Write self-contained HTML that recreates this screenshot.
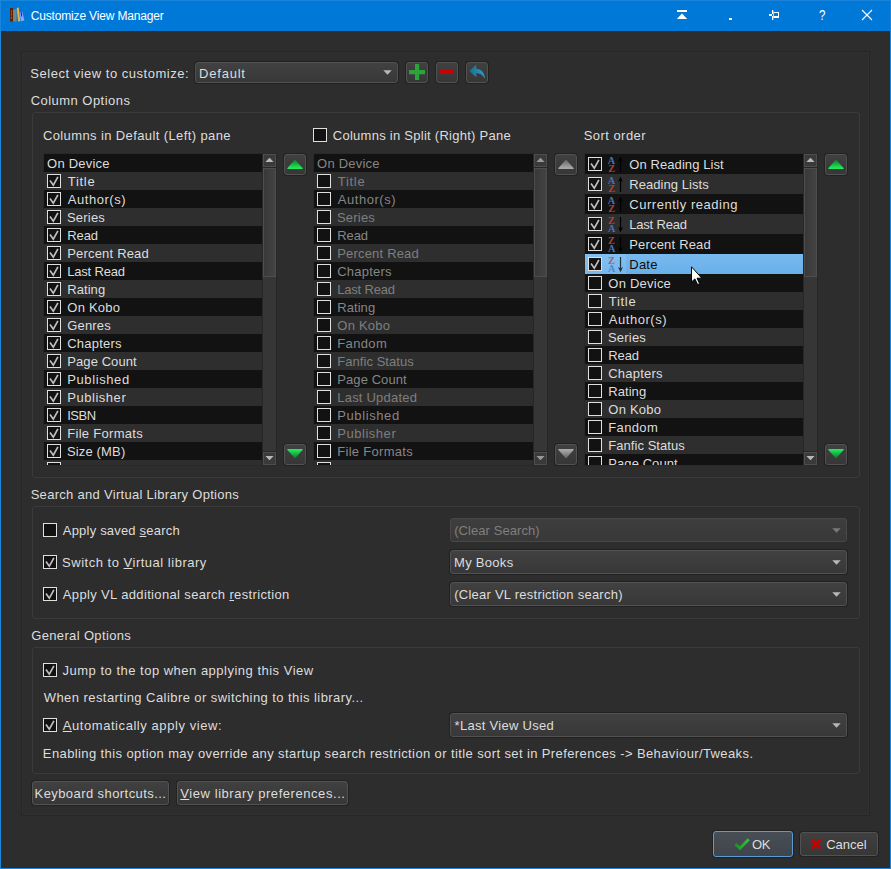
<!DOCTYPE html>
<html><head><meta charset="utf-8"><title>Customize View Manager</title><style>
html,body{margin:0;padding:0}
body{width:891px;height:869px;position:relative;overflow:hidden;background:#2d2d2d;color:#dddddd;font-family:"Liberation Sans",sans-serif;font-size:13px;line-height:18px}
body>div,body>span,body>svg,body>div>svg{position:absolute;display:block}
span{white-space:pre}
u{text-decoration:underline;text-underline-offset:1px}
</style></head><body>
<div style="left:0px;top:0px;width:891px;height:31px;background:#0078d7"></div>
<div style="left:0px;top:0px;width:891px;height:1px;background:#1a85db"></div>
<div style="left:0px;top:0px;width:1px;height:869px;background:#1a85db"></div>
<div style="left:890px;top:0px;width:1px;height:869px;background:#1a85db"></div>
<div style="left:0px;top:868px;width:891px;height:1px;background:#1a85db"></div>
<svg style="left:8px;top:6px" width="18" height="18" viewBox="8 6 18 18"><rect x="10" y="8" width="3.1" height="13.5" fill="#5c2407"/><path d="M11.1 10.5h0.9v2h-0.9zM11.1 13.5h0.9v2h-0.9zM11.1 16.8h0.9v2h-0.9z" fill="#b06a14"/><rect x="13.1" y="9.5" width="3.5" height="12" fill="#74868b"/><path d="M16.7 8.1L18.7 7.6L20.2 21.2L18.2 21.6z" fill="#e6b64b"/><path d="M19.6 12.2L22.4 12L24.4 20.6L20.9 21.3z" fill="#86a6ff"/><path d="M20.6 12.4L22 12.3L22.1 16.6L21.1 16.6z" fill="#1b27c4"/></svg>
<svg style="left:676px;top:9px" width="12" height="11" viewBox="676 9 12 11"><rect x="677" y="10" width="10" height="2" fill="#fff"/><path d="M682 13.6L687.2 19H676.8z" fill="#fff"/></svg>
<div style="left:729px;top:18px;width:3px;height:2px;background:#fff"></div>
<svg style="left:768px;top:9px" width="12" height="12" viewBox="768 9 12 12"><path d="M769 14h4v2h-4zM772 10h1.3v10H772zM773 12h6v6h-6zM774 13v3h4v-3z" fill="#fff" fill-rule="evenodd"/></svg>
<svg style="left:814px;top:6px" width="16" height="18" viewBox="814 6 16 18"><text x="822.2" y="20" font-size="14" text-anchor="middle" fill="#fff" font-family="Liberation Sans,sans-serif" transform="translate(822.2 0) scale(0.82 1) translate(-822.2 0)">?</text></svg>
<svg style="left:861px;top:9px" width="12" height="12" viewBox="861 9 12 12"><path d="M862 10L872 20M872 10L862 20" stroke="#fff" stroke-width="1.1" fill="none"/></svg>
<div style="left:21px;top:51px;width:849px;height:765px;box-sizing:border-box;border:1px solid #262626"></div>
<div style="left:22px;top:52px;width:847px;height:763px;box-sizing:border-box;border:1px solid #303030"></div>
<div style="left:195px;top:62px;width:203px;height:21px;box-sizing:border-box;border-radius:3px;border:1px solid #515151;box-shadow:0 0 0 1px #222;background:linear-gradient(#414141,#383838)"></div>
<svg style="left:383px;top:70px" width="9" height="5" viewBox="0 0 9 5"><path d="M0.3 0.2h8.4L4.5 4.8z" fill="#b8b8b8"/></svg>
<div style="left:406px;top:62px;width:22px;height:21px;box-sizing:border-box;border:1px solid #525252;border-radius:3px;box-shadow:0 0 0 1px #222;background:linear-gradient(#404040,#373737);"></div>
<svg style="left:409px;top:64px" width="16" height="16" viewBox="0 0 16 16"><path d="M6 0h4.2v6h5.8v4.2h-5.8v5.8h-4.2v-5.8h-6v-4.2h6z" fill="#2ba338"/></svg>
<div style="left:436px;top:62px;width:22px;height:21px;box-sizing:border-box;border:1px solid #525252;border-radius:3px;box-shadow:0 0 0 1px #222;background:linear-gradient(#404040,#373737);"></div>
<svg style="left:439px;top:64px" width="16" height="16" viewBox="0 0 16 16"><rect x="1" y="6" width="14" height="4" rx="0.5" fill="#cc0000"/></svg>
<div style="left:466px;top:62px;width:22px;height:21px;box-sizing:border-box;border:1px solid #525252;border-radius:3px;box-shadow:0 0 0 1px #222;background:linear-gradient(#404040,#373737);"></div>
<svg style="left:468px;top:63px" width="18" height="17" viewBox="468 63 18 17"><defs><linearGradient id="undo" x1="0" y1="0" x2="1" y2="0"><stop offset="0" stop-color="#1c6c8c"/><stop offset="1" stop-color="#2ba0cc"/></linearGradient></defs><path d="M469.3 71L476.3 64.7V68.7C481.2 68.8 484.6 72.4 485.1 79C483 75.2 480.6 73.4 476.3 73.3V77.3z" fill="url(#undo)"/></svg>
<div style="left:32px;top:112px;width:828px;height:366px;box-sizing:border-box;border:1px solid #3a3a3a;border-radius:3px"></div>
<div style="left:313px;top:128px;width:14px;height:14px;box-sizing:border-box;border:1px solid #e0e0e0;background:#121212"></div>
<div style="left:43px;top:153px;width:234px;height:313px;background:#292929"></div>
<div style="left:44px;top:154px;width:218px;height:311px;background:#121212"></div>
<div style="left:44px;top:172px;width:218px;height:18px;background:#2e2e2e"></div>
<div style="left:47px;top:174px;width:14px;height:14px;box-sizing:border-box;border:1px solid #e0e0e0;background:#121212"><svg style="left:0;top:0" width="12" height="12" viewBox="0 0 12 12"><path d="M2 5.6L5.3 10.2L9.9 1.9" fill="none" stroke="#bebebe" stroke-width="1.7"/></svg></div>
<div style="left:47px;top:192px;width:14px;height:14px;box-sizing:border-box;border:1px solid #e0e0e0;background:#121212"><svg style="left:0;top:0" width="12" height="12" viewBox="0 0 12 12"><path d="M2 5.6L5.3 10.2L9.9 1.9" fill="none" stroke="#bebebe" stroke-width="1.7"/></svg></div>
<div style="left:44px;top:208px;width:218px;height:18px;background:#2e2e2e"></div>
<div style="left:47px;top:210px;width:14px;height:14px;box-sizing:border-box;border:1px solid #e0e0e0;background:#121212"><svg style="left:0;top:0" width="12" height="12" viewBox="0 0 12 12"><path d="M2 5.6L5.3 10.2L9.9 1.9" fill="none" stroke="#bebebe" stroke-width="1.7"/></svg></div>
<div style="left:47px;top:228px;width:14px;height:14px;box-sizing:border-box;border:1px solid #e0e0e0;background:#121212"><svg style="left:0;top:0" width="12" height="12" viewBox="0 0 12 12"><path d="M2 5.6L5.3 10.2L9.9 1.9" fill="none" stroke="#bebebe" stroke-width="1.7"/></svg></div>
<div style="left:44px;top:244px;width:218px;height:18px;background:#2e2e2e"></div>
<div style="left:47px;top:246px;width:14px;height:14px;box-sizing:border-box;border:1px solid #e0e0e0;background:#121212"><svg style="left:0;top:0" width="12" height="12" viewBox="0 0 12 12"><path d="M2 5.6L5.3 10.2L9.9 1.9" fill="none" stroke="#bebebe" stroke-width="1.7"/></svg></div>
<div style="left:47px;top:264px;width:14px;height:14px;box-sizing:border-box;border:1px solid #e0e0e0;background:#121212"><svg style="left:0;top:0" width="12" height="12" viewBox="0 0 12 12"><path d="M2 5.6L5.3 10.2L9.9 1.9" fill="none" stroke="#bebebe" stroke-width="1.7"/></svg></div>
<div style="left:44px;top:280px;width:218px;height:18px;background:#2e2e2e"></div>
<div style="left:47px;top:282px;width:14px;height:14px;box-sizing:border-box;border:1px solid #e0e0e0;background:#121212"><svg style="left:0;top:0" width="12" height="12" viewBox="0 0 12 12"><path d="M2 5.6L5.3 10.2L9.9 1.9" fill="none" stroke="#bebebe" stroke-width="1.7"/></svg></div>
<div style="left:47px;top:300px;width:14px;height:14px;box-sizing:border-box;border:1px solid #e0e0e0;background:#121212"><svg style="left:0;top:0" width="12" height="12" viewBox="0 0 12 12"><path d="M2 5.6L5.3 10.2L9.9 1.9" fill="none" stroke="#bebebe" stroke-width="1.7"/></svg></div>
<div style="left:44px;top:316px;width:218px;height:18px;background:#2e2e2e"></div>
<div style="left:47px;top:318px;width:14px;height:14px;box-sizing:border-box;border:1px solid #e0e0e0;background:#121212"><svg style="left:0;top:0" width="12" height="12" viewBox="0 0 12 12"><path d="M2 5.6L5.3 10.2L9.9 1.9" fill="none" stroke="#bebebe" stroke-width="1.7"/></svg></div>
<div style="left:47px;top:336px;width:14px;height:14px;box-sizing:border-box;border:1px solid #e0e0e0;background:#121212"><svg style="left:0;top:0" width="12" height="12" viewBox="0 0 12 12"><path d="M2 5.6L5.3 10.2L9.9 1.9" fill="none" stroke="#bebebe" stroke-width="1.7"/></svg></div>
<div style="left:44px;top:352px;width:218px;height:18px;background:#2e2e2e"></div>
<div style="left:47px;top:354px;width:14px;height:14px;box-sizing:border-box;border:1px solid #e0e0e0;background:#121212"><svg style="left:0;top:0" width="12" height="12" viewBox="0 0 12 12"><path d="M2 5.6L5.3 10.2L9.9 1.9" fill="none" stroke="#bebebe" stroke-width="1.7"/></svg></div>
<div style="left:47px;top:372px;width:14px;height:14px;box-sizing:border-box;border:1px solid #e0e0e0;background:#121212"><svg style="left:0;top:0" width="12" height="12" viewBox="0 0 12 12"><path d="M2 5.6L5.3 10.2L9.9 1.9" fill="none" stroke="#bebebe" stroke-width="1.7"/></svg></div>
<div style="left:44px;top:388px;width:218px;height:18px;background:#2e2e2e"></div>
<div style="left:47px;top:390px;width:14px;height:14px;box-sizing:border-box;border:1px solid #e0e0e0;background:#121212"><svg style="left:0;top:0" width="12" height="12" viewBox="0 0 12 12"><path d="M2 5.6L5.3 10.2L9.9 1.9" fill="none" stroke="#bebebe" stroke-width="1.7"/></svg></div>
<div style="left:47px;top:408px;width:14px;height:14px;box-sizing:border-box;border:1px solid #e0e0e0;background:#121212"><svg style="left:0;top:0" width="12" height="12" viewBox="0 0 12 12"><path d="M2 5.6L5.3 10.2L9.9 1.9" fill="none" stroke="#bebebe" stroke-width="1.7"/></svg></div>
<div style="left:44px;top:424px;width:218px;height:18px;background:#2e2e2e"></div>
<div style="left:47px;top:426px;width:14px;height:14px;box-sizing:border-box;border:1px solid #e0e0e0;background:#121212"><svg style="left:0;top:0" width="12" height="12" viewBox="0 0 12 12"><path d="M2 5.6L5.3 10.2L9.9 1.9" fill="none" stroke="#bebebe" stroke-width="1.7"/></svg></div>
<div style="left:47px;top:444px;width:14px;height:14px;box-sizing:border-box;border:1px solid #e0e0e0;background:#121212"><svg style="left:0;top:0" width="12" height="12" viewBox="0 0 12 12"><path d="M2 5.6L5.3 10.2L9.9 1.9" fill="none" stroke="#bebebe" stroke-width="1.7"/></svg></div>
<div style="left:44px;top:460px;width:218px;height:5px;background:#2e2e2e"></div>
<div style="left:47px;top:462px;width:14px;height:3px;box-sizing:border-box;border:1px solid #e0e0e0;border-bottom:none;background:#121212"></div>
<div style="left:262px;top:154px;width:15px;height:311px;background:#272727"></div>
<div style="left:263px;top:168px;width:13px;height:283px;background:#363636"></div>
<div style="left:263px;top:154px;width:13px;height:13px;box-sizing:border-box;border:1px solid #4e4e4e;background:#3a3a3a"></div>
<svg style="left:265px;top:158px" width="9" height="5" viewBox="0 0 9 5"><path d="M0.4 4L4.2 0H4.8L8.6 4z" fill="#b8b8b8"/></svg>
<div style="left:263px;top:452px;width:13px;height:13px;box-sizing:border-box;border:1px solid #4e4e4e;background:#3a3a3a"></div>
<svg style="left:265px;top:456px" width="9" height="5" viewBox="0 0 9 5"><path d="M0.4 0L4.2 4H4.8L8.6 0z" fill="#b8b8b8"/></svg>
<div style="left:263px;top:168px;width:13px;height:109px;box-sizing:border-box;border:1px solid #4e4e4e;background:linear-gradient(90deg,#393939,#434343)"></div>
<div style="left:313px;top:153px;width:235px;height:313px;background:#292929"></div>
<div style="left:314px;top:154px;width:219px;height:311px;background:#121212"></div>
<div style="left:314px;top:172px;width:219px;height:18px;background:#2e2e2e"></div>
<div style="left:317px;top:174px;width:14px;height:14px;box-sizing:border-box;border:1px solid #e0e0e0;background:#121212"></div>
<div style="left:317px;top:192px;width:14px;height:14px;box-sizing:border-box;border:1px solid #e0e0e0;background:#121212"></div>
<div style="left:314px;top:208px;width:219px;height:18px;background:#2e2e2e"></div>
<div style="left:317px;top:210px;width:14px;height:14px;box-sizing:border-box;border:1px solid #e0e0e0;background:#121212"></div>
<div style="left:317px;top:228px;width:14px;height:14px;box-sizing:border-box;border:1px solid #e0e0e0;background:#121212"></div>
<div style="left:314px;top:244px;width:219px;height:18px;background:#2e2e2e"></div>
<div style="left:317px;top:246px;width:14px;height:14px;box-sizing:border-box;border:1px solid #e0e0e0;background:#121212"></div>
<div style="left:317px;top:264px;width:14px;height:14px;box-sizing:border-box;border:1px solid #e0e0e0;background:#121212"></div>
<div style="left:314px;top:280px;width:219px;height:18px;background:#2e2e2e"></div>
<div style="left:317px;top:282px;width:14px;height:14px;box-sizing:border-box;border:1px solid #e0e0e0;background:#121212"></div>
<div style="left:317px;top:300px;width:14px;height:14px;box-sizing:border-box;border:1px solid #e0e0e0;background:#121212"></div>
<div style="left:314px;top:316px;width:219px;height:18px;background:#2e2e2e"></div>
<div style="left:317px;top:318px;width:14px;height:14px;box-sizing:border-box;border:1px solid #e0e0e0;background:#121212"></div>
<div style="left:317px;top:336px;width:14px;height:14px;box-sizing:border-box;border:1px solid #e0e0e0;background:#121212"></div>
<div style="left:314px;top:352px;width:219px;height:18px;background:#2e2e2e"></div>
<div style="left:317px;top:354px;width:14px;height:14px;box-sizing:border-box;border:1px solid #e0e0e0;background:#121212"></div>
<div style="left:317px;top:372px;width:14px;height:14px;box-sizing:border-box;border:1px solid #e0e0e0;background:#121212"></div>
<div style="left:314px;top:388px;width:219px;height:18px;background:#2e2e2e"></div>
<div style="left:317px;top:390px;width:14px;height:14px;box-sizing:border-box;border:1px solid #e0e0e0;background:#121212"></div>
<div style="left:317px;top:408px;width:14px;height:14px;box-sizing:border-box;border:1px solid #e0e0e0;background:#121212"></div>
<div style="left:314px;top:424px;width:219px;height:18px;background:#2e2e2e"></div>
<div style="left:317px;top:426px;width:14px;height:14px;box-sizing:border-box;border:1px solid #e0e0e0;background:#121212"></div>
<div style="left:317px;top:444px;width:14px;height:14px;box-sizing:border-box;border:1px solid #e0e0e0;background:#121212"></div>
<div style="left:314px;top:460px;width:219px;height:5px;background:#2e2e2e"></div>
<div style="left:317px;top:462px;width:14px;height:3px;box-sizing:border-box;border:1px solid #e0e0e0;border-bottom:none;background:#121212"></div>
<div style="left:533px;top:154px;width:15px;height:311px;background:#272727"></div>
<div style="left:534px;top:168px;width:13px;height:283px;background:#363636"></div>
<div style="left:534px;top:154px;width:13px;height:13px;box-sizing:border-box;border:1px solid #4e4e4e;background:#3a3a3a"></div>
<svg style="left:536px;top:158px" width="9" height="5" viewBox="0 0 9 5"><path d="M0.4 4L4.2 0H4.8L8.6 4z" fill="#989898"/></svg>
<div style="left:534px;top:452px;width:13px;height:13px;box-sizing:border-box;border:1px solid #4e4e4e;background:#3a3a3a"></div>
<svg style="left:536px;top:456px" width="9" height="5" viewBox="0 0 9 5"><path d="M0.4 0L4.2 4H4.8L8.6 0z" fill="#989898"/></svg>
<div style="left:534px;top:168px;width:13px;height:109px;box-sizing:border-box;border:1px solid #4e4e4e;background:linear-gradient(90deg,#393939,#434343)"></div>
<div style="left:584px;top:153px;width:234px;height:313px;background:#292929"></div>
<div style="left:585px;top:154px;width:218px;height:311px;background:#121212"></div>
<div style="left:588px;top:157px;width:14px;height:14px;box-sizing:border-box;border:1px solid #e0e0e0;background:#121212"><svg style="left:0;top:0" width="12" height="12" viewBox="0 0 12 12"><path d="M2 5.6L5.3 10.2L9.9 1.9" fill="none" stroke="#bebebe" stroke-width="1.7"/></svg></div>
<svg style="left:607px;top:156px" width="17" height="17" viewBox="0 0 17 17"><text x="4.5" y="8" font-size="10.2" font-weight="bold" font-family="Liberation Serif,serif" text-anchor="middle" fill="#4a72bc">A</text><text x="4.6" y="16" font-size="10.2" font-weight="bold" font-family="Liberation Serif,serif" text-anchor="middle" fill="#a8443e">Z</text><path d="M12.9 16V4h1.2V16zM13.5 0.8L16 6L13.5 4.6L11 6z" fill="#000"/></svg>
<div style="left:585px;top:174px;width:218px;height:20px;background:#2e2e2e"></div>
<div style="left:588px;top:177px;width:14px;height:14px;box-sizing:border-box;border:1px solid #e0e0e0;background:#121212"><svg style="left:0;top:0" width="12" height="12" viewBox="0 0 12 12"><path d="M2 5.6L5.3 10.2L9.9 1.9" fill="none" stroke="#bebebe" stroke-width="1.7"/></svg></div>
<svg style="left:607px;top:176px" width="17" height="17" viewBox="0 0 17 17"><text x="4.5" y="8" font-size="10.2" font-weight="bold" font-family="Liberation Serif,serif" text-anchor="middle" fill="#4a72bc">A</text><text x="4.6" y="16" font-size="10.2" font-weight="bold" font-family="Liberation Serif,serif" text-anchor="middle" fill="#a8443e">Z</text><path d="M12.9 16V4h1.2V16zM13.5 0.8L16 6L13.5 4.6L11 6z" fill="#000"/></svg>
<div style="left:588px;top:197px;width:14px;height:14px;box-sizing:border-box;border:1px solid #e0e0e0;background:#121212"><svg style="left:0;top:0" width="12" height="12" viewBox="0 0 12 12"><path d="M2 5.6L5.3 10.2L9.9 1.9" fill="none" stroke="#bebebe" stroke-width="1.7"/></svg></div>
<svg style="left:607px;top:196px" width="17" height="17" viewBox="0 0 17 17"><text x="4.5" y="8" font-size="10.2" font-weight="bold" font-family="Liberation Serif,serif" text-anchor="middle" fill="#4a72bc">A</text><text x="4.6" y="16" font-size="10.2" font-weight="bold" font-family="Liberation Serif,serif" text-anchor="middle" fill="#a8443e">Z</text><path d="M12.9 16V4h1.2V16zM13.5 0.8L16 6L13.5 4.6L11 6z" fill="#000"/></svg>
<div style="left:585px;top:214px;width:218px;height:20px;background:#2e2e2e"></div>
<div style="left:588px;top:217px;width:14px;height:14px;box-sizing:border-box;border:1px solid #e0e0e0;background:#121212"><svg style="left:0;top:0" width="12" height="12" viewBox="0 0 12 12"><path d="M2 5.6L5.3 10.2L9.9 1.9" fill="none" stroke="#bebebe" stroke-width="1.7"/></svg></div>
<svg style="left:607px;top:216px" width="17" height="17" viewBox="0 0 17 17"><text x="4.5" y="8" font-size="10.2" font-weight="bold" font-family="Liberation Serif,serif" text-anchor="middle" fill="#a8443e">Z</text><text x="4.6" y="16" font-size="10.2" font-weight="bold" font-family="Liberation Serif,serif" text-anchor="middle" fill="#4a72bc">A</text><path d="M12.9 1V13h1.2V1zM13.5 16.2L16 11L13.5 12.4L11 11z" fill="#000"/></svg>
<div style="left:588px;top:237px;width:14px;height:14px;box-sizing:border-box;border:1px solid #e0e0e0;background:#121212"><svg style="left:0;top:0" width="12" height="12" viewBox="0 0 12 12"><path d="M2 5.6L5.3 10.2L9.9 1.9" fill="none" stroke="#bebebe" stroke-width="1.7"/></svg></div>
<svg style="left:607px;top:236px" width="17" height="17" viewBox="0 0 17 17"><text x="4.5" y="8" font-size="10.2" font-weight="bold" font-family="Liberation Serif,serif" text-anchor="middle" fill="#a8443e">Z</text><text x="4.6" y="16" font-size="10.2" font-weight="bold" font-family="Liberation Serif,serif" text-anchor="middle" fill="#4a72bc">A</text><path d="M12.9 1V13h1.2V1zM13.5 16.2L16 11L13.5 12.4L11 11z" fill="#000"/></svg>
<div style="left:585px;top:254px;width:218px;height:20px;background:linear-gradient(#78baef,#69afe9)"></div>
<div style="left:585px;top:254px;width:41px;height:20px;background:linear-gradient(#82c0f1,#76b7ec)"></div>
<div style="left:588px;top:257px;width:14px;height:14px;box-sizing:border-box;border:1px solid #e0e0e0;background:#121212"><svg style="left:0;top:0" width="12" height="12" viewBox="0 0 12 12"><path d="M2 5.6L5.3 10.2L9.9 1.9" fill="none" stroke="#bebebe" stroke-width="1.7"/></svg></div>
<svg style="opacity:0.72;left:607px;top:256px" width="17" height="17" viewBox="0 0 17 17"><text x="4.5" y="8" font-size="10.2" font-weight="bold" font-family="Liberation Serif,serif" text-anchor="middle" fill="#a8443e">Z</text><text x="4.6" y="16" font-size="10.2" font-weight="bold" font-family="Liberation Serif,serif" text-anchor="middle" fill="#4a72bc">A</text><path d="M12.9 1V13h1.2V1zM13.5 16.2L16 11L13.5 12.4L11 11z" fill="#000"/></svg>
<div style="left:588px;top:276px;width:14px;height:14px;box-sizing:border-box;border:1px solid #e0e0e0;background:#121212"></div>
<div style="left:585px;top:292px;width:218px;height:18px;background:#2e2e2e"></div>
<div style="left:588px;top:294px;width:14px;height:14px;box-sizing:border-box;border:1px solid #e0e0e0;background:#121212"></div>
<div style="left:588px;top:312px;width:14px;height:14px;box-sizing:border-box;border:1px solid #e0e0e0;background:#121212"></div>
<div style="left:585px;top:328px;width:218px;height:18px;background:#2e2e2e"></div>
<div style="left:588px;top:330px;width:14px;height:14px;box-sizing:border-box;border:1px solid #e0e0e0;background:#121212"></div>
<div style="left:588px;top:348px;width:14px;height:14px;box-sizing:border-box;border:1px solid #e0e0e0;background:#121212"></div>
<div style="left:585px;top:364px;width:218px;height:18px;background:#2e2e2e"></div>
<div style="left:588px;top:366px;width:14px;height:14px;box-sizing:border-box;border:1px solid #e0e0e0;background:#121212"></div>
<div style="left:588px;top:384px;width:14px;height:14px;box-sizing:border-box;border:1px solid #e0e0e0;background:#121212"></div>
<div style="left:585px;top:400px;width:218px;height:18px;background:#2e2e2e"></div>
<div style="left:588px;top:402px;width:14px;height:14px;box-sizing:border-box;border:1px solid #e0e0e0;background:#121212"></div>
<div style="left:588px;top:420px;width:14px;height:14px;box-sizing:border-box;border:1px solid #e0e0e0;background:#121212"></div>
<div style="left:585px;top:436px;width:218px;height:18px;background:#2e2e2e"></div>
<div style="left:588px;top:438px;width:14px;height:14px;box-sizing:border-box;border:1px solid #e0e0e0;background:#121212"></div>
<div style="left:588px;top:456px;width:14px;height:9px;box-sizing:border-box;border:1px solid #e0e0e0;border-bottom:none;background:#121212"></div>
<div style="left:803px;top:154px;width:15px;height:311px;background:#272727"></div>
<div style="left:804px;top:168px;width:13px;height:283px;background:#363636"></div>
<div style="left:804px;top:154px;width:13px;height:13px;box-sizing:border-box;border:1px solid #4e4e4e;background:#3a3a3a"></div>
<svg style="left:806px;top:158px" width="9" height="5" viewBox="0 0 9 5"><path d="M0.4 4L4.2 0H4.8L8.6 4z" fill="#b8b8b8"/></svg>
<div style="left:804px;top:452px;width:13px;height:13px;box-sizing:border-box;border:1px solid #4e4e4e;background:#3a3a3a"></div>
<svg style="left:806px;top:456px" width="9" height="5" viewBox="0 0 9 5"><path d="M0.4 0L4.2 4H4.8L8.6 0z" fill="#b8b8b8"/></svg>
<div style="left:804px;top:168px;width:13px;height:109px;box-sizing:border-box;border:1px solid #4e4e4e;background:linear-gradient(90deg,#393939,#434343)"></div>
<div style="left:284px;top:154px;width:22px;height:21px;box-sizing:border-box;border:1px solid #525252;border-radius:3px;box-shadow:0 0 0 1px #222;background:linear-gradient(#404040,#373737);"></div>
<svg style="left:287px;top:158.6px" width="16" height="10" viewBox="0 0 16 10"><defs><linearGradient id="g284154" x1="0" y1="0" x2="0" y2="1"><stop offset="0.1" stop-color="#0f8a2c"/><stop offset="0.9" stop-color="#20e85c"/></linearGradient></defs><path d="M0.2 9.2Q0 10 1 10H15Q16 10 15.8 9.2L8.4 1H7.6z" fill="url(#g284154)"/></svg>
<div style="left:284px;top:444px;width:22px;height:21px;box-sizing:border-box;border:1px solid #525252;border-radius:3px;box-shadow:0 0 0 1px #222;background:linear-gradient(#404040,#373737);"></div>
<svg style="left:287px;top:448.9px" width="16" height="10" viewBox="0 0 16 10"><defs><linearGradient id="g284444" x1="0" y1="0" x2="0" y2="1"><stop offset="0.1" stop-color="#20e85c"/><stop offset="0.9" stop-color="#0f8a2c"/></linearGradient></defs><path d="M0.2 0.8Q0 0 1 0H15Q16 0 15.8 0.8L8.4 9H7.6z" fill="url(#g284444)"/></svg>
<div style="left:555px;top:154px;width:22px;height:21px;box-sizing:border-box;border:1px solid #525252;border-radius:3px;box-shadow:0 0 0 1px #222;background:linear-gradient(#404040,#373737);"></div>
<svg style="left:558px;top:158.6px" width="16" height="10" viewBox="0 0 16 10"><defs><linearGradient id="g555154" x1="0" y1="0" x2="0" y2="1"><stop offset="0.1" stop-color="#6e6e6e"/><stop offset="0.9" stop-color="#a8a8a8"/></linearGradient></defs><path d="M0.2 9.2Q0 10 1 10H15Q16 10 15.8 9.2L8.4 1H7.6z" fill="url(#g555154)"/></svg>
<div style="left:555px;top:444px;width:22px;height:21px;box-sizing:border-box;border:1px solid #525252;border-radius:3px;box-shadow:0 0 0 1px #222;background:linear-gradient(#404040,#373737);"></div>
<svg style="left:558px;top:448.9px" width="16" height="10" viewBox="0 0 16 10"><defs><linearGradient id="g555444" x1="0" y1="0" x2="0" y2="1"><stop offset="0.1" stop-color="#a8a8a8"/><stop offset="0.9" stop-color="#6e6e6e"/></linearGradient></defs><path d="M0.2 0.8Q0 0 1 0H15Q16 0 15.8 0.8L8.4 9H7.6z" fill="url(#g555444)"/></svg>
<div style="left:825px;top:154px;width:22px;height:21px;box-sizing:border-box;border:1px solid #525252;border-radius:3px;box-shadow:0 0 0 1px #222;background:linear-gradient(#404040,#373737);"></div>
<svg style="left:828px;top:158.6px" width="16" height="10" viewBox="0 0 16 10"><defs><linearGradient id="g825154" x1="0" y1="0" x2="0" y2="1"><stop offset="0.1" stop-color="#0f8a2c"/><stop offset="0.9" stop-color="#20e85c"/></linearGradient></defs><path d="M0.2 9.2Q0 10 1 10H15Q16 10 15.8 9.2L8.4 1H7.6z" fill="url(#g825154)"/></svg>
<div style="left:825px;top:444px;width:22px;height:21px;box-sizing:border-box;border:1px solid #525252;border-radius:3px;box-shadow:0 0 0 1px #222;background:linear-gradient(#404040,#373737);"></div>
<svg style="left:828px;top:448.9px" width="16" height="10" viewBox="0 0 16 10"><defs><linearGradient id="g825444" x1="0" y1="0" x2="0" y2="1"><stop offset="0.1" stop-color="#20e85c"/><stop offset="0.9" stop-color="#0f8a2c"/></linearGradient></defs><path d="M0.2 0.8Q0 0 1 0H15Q16 0 15.8 0.8L8.4 9H7.6z" fill="url(#g825444)"/></svg>
<div style="left:32px;top:506px;width:828px;height:113px;box-sizing:border-box;border:1px solid #3a3a3a;border-radius:3px"></div>
<div style="left:43px;top:523px;width:14px;height:14px;box-sizing:border-box;border:1px solid #e0e0e0;background:#121212"></div>
<div style="left:43px;top:555px;width:14px;height:14px;box-sizing:border-box;border:1px solid #e0e0e0;background:#121212"><svg style="left:0;top:0" width="12" height="12" viewBox="0 0 12 12"><path d="M2 5.6L5.3 10.2L9.9 1.9" fill="none" stroke="#bebebe" stroke-width="1.7"/></svg></div>
<div style="left:43px;top:587px;width:14px;height:14px;box-sizing:border-box;border:1px solid #e0e0e0;background:#121212"><svg style="left:0;top:0" width="12" height="12" viewBox="0 0 12 12"><path d="M2 5.6L5.3 10.2L9.9 1.9" fill="none" stroke="#bebebe" stroke-width="1.7"/></svg></div>
<div style="left:450px;top:518px;width:397px;height:24px;box-sizing:border-box;border-radius:3px;border:1px solid #484848;background:linear-gradient(#3e3e3e,#383838)"></div>
<svg style="left:832px;top:528px" width="9" height="5" viewBox="0 0 9 5"><path d="M0.3 0.2h8.4L4.5 4.8z" fill="#7a7a7a"/></svg>
<div style="left:450px;top:550px;width:397px;height:24px;box-sizing:border-box;border-radius:3px;border:1px solid #515151;box-shadow:0 0 0 1px #222;background:linear-gradient(#414141,#383838)"></div>
<svg style="left:832px;top:560px" width="9" height="5" viewBox="0 0 9 5"><path d="M0.3 0.2h8.4L4.5 4.8z" fill="#b8b8b8"/></svg>
<div style="left:450px;top:582px;width:397px;height:24px;box-sizing:border-box;border-radius:3px;border:1px solid #515151;box-shadow:0 0 0 1px #222;background:linear-gradient(#414141,#383838)"></div>
<svg style="left:832px;top:592px" width="9" height="5" viewBox="0 0 9 5"><path d="M0.3 0.2h8.4L4.5 4.8z" fill="#b8b8b8"/></svg>
<div style="left:32px;top:647px;width:828px;height:127px;box-sizing:border-box;border:1px solid #3a3a3a;border-radius:3px"></div>
<div style="left:43px;top:663px;width:14px;height:14px;box-sizing:border-box;border:1px solid #e0e0e0;background:#121212"><svg style="left:0;top:0" width="12" height="12" viewBox="0 0 12 12"><path d="M2 5.6L5.3 10.2L9.9 1.9" fill="none" stroke="#bebebe" stroke-width="1.7"/></svg></div>
<div style="left:43px;top:718px;width:14px;height:14px;box-sizing:border-box;border:1px solid #e0e0e0;background:#121212"><svg style="left:0;top:0" width="12" height="12" viewBox="0 0 12 12"><path d="M2 5.6L5.3 10.2L9.9 1.9" fill="none" stroke="#bebebe" stroke-width="1.7"/></svg></div>
<div style="left:450px;top:713px;width:397px;height:24px;box-sizing:border-box;border-radius:3px;border:1px solid #515151;box-shadow:0 0 0 1px #222;background:linear-gradient(#414141,#383838)"></div>
<svg style="left:832px;top:723px" width="9" height="5" viewBox="0 0 9 5"><path d="M0.3 0.2h8.4L4.5 4.8z" fill="#b8b8b8"/></svg>
<div style="left:32px;top:781px;width:137px;height:24px;box-sizing:border-box;border:1px solid #525252;border-radius:3px;box-shadow:0 0 0 1px #222;background:linear-gradient(#404040,#373737);"></div>
<div style="left:177px;top:781px;width:171px;height:24px;box-sizing:border-box;border:1px solid #525252;border-radius:3px;box-shadow:0 0 0 1px #222;background:linear-gradient(#404040,#373737);"></div>
<div style="left:713px;top:831px;width:80px;height:26px;box-sizing:border-box;border:1px solid #525252;border-radius:3px;box-shadow:0 0 0 1px #222;background:linear-gradient(#404040,#373737);border-color:#5a9bd8;background:linear-gradient(#484e55,#3f454b)"></div>
<svg style="left:732px;top:836px" width="19" height="15" viewBox="732 836 19 15"><defs><linearGradient id="okg" x1="0" y1="0" x2="1" y2="0"><stop offset="0" stop-color="#17921e"/><stop offset="1" stop-color="#30c23a"/></linearGradient></defs><path d="M735.2 844.2L740 848.2L748.7 839.3" fill="none" stroke="url(#okg)" stroke-width="3"/></svg>
<div style="left:800px;top:832px;width:78px;height:24px;box-sizing:border-box;border:1px solid #525252;border-radius:3px;box-shadow:0 0 0 1px #222;background:linear-gradient(#404040,#373737);"></div>
<svg style="left:810px;top:838px" width="12" height="12" viewBox="0 0 12 12"><path d="M1.5 1.5L10.5 10.5M10.5 1.5L1.5 10.5" fill="none" stroke="#c80000" stroke-width="3"/></svg>
<span style="left:30.78px;top:7.00px;color:#fff;font-size:12px;letter-spacing:-0.167px;">Customize View Manager</span>
<span style="left:30.35px;top:65.00px;letter-spacing:0.512px;">Select view to customize:</span>
<span style="left:199.06px;top:65.00px;letter-spacing:0.786px;">Default</span>
<span style="left:30.68px;top:92.00px;letter-spacing:0.465px;">Column Options</span>
<span style="left:42.88px;top:127.00px;letter-spacing:0.392px;">Columns in Default (Left) pane</span>
<span style="left:332.78px;top:127.00px;letter-spacing:0.265px;">Columns in Split (Right) Pane</span>
<span style="left:583.75px;top:127.00px;letter-spacing:0.448px;">Sort order</span>
<span style="left:47.05px;top:155.00px;letter-spacing:0.225px;">On Device</span>
<span style="left:67.71px;top:173.00px;letter-spacing:0.719px;">Title</span>
<span style="left:67.74px;top:191.00px;letter-spacing:0.547px;">Author(s)</span>
<span style="left:66.95px;top:209.00px;letter-spacing:0.208px;">Series</span>
<span style="left:67.26px;top:227.00px;letter-spacing:-0.106px;">Read</span>
<span style="left:67.26px;top:245.00px;letter-spacing:0.183px;">Percent Read</span>
<span style="left:67.26px;top:263.00px;letter-spacing:-0.196px;">Last Read</span>
<span style="left:67.26px;top:281.00px;letter-spacing:0.062px;">Rating</span>
<span style="left:67.34px;top:299.00px;letter-spacing:0.218px;">On Kobo</span>
<span style="left:67.28px;top:317.00px;letter-spacing:0.162px;">Genres</span>
<span style="left:67.28px;top:335.00px;letter-spacing:0.216px;">Chapters</span>
<span style="left:67.26px;top:353.00px;letter-spacing:0.083px;">Page Count</span>
<span style="left:67.26px;top:371.00px;letter-spacing:0.598px;">Published</span>
<span style="left:67.26px;top:389.00px;letter-spacing:0.533px;">Publisher</span>
<span style="left:67.15px;top:407.00px;letter-spacing:-0.478px;">ISBN</span>
<span style="left:67.26px;top:425.00px;letter-spacing:0.296px;">File Formats</span>
<span style="left:66.95px;top:443.00px;letter-spacing:0.153px;">Size (MB)</span>
<span style="left:67.26px;top:461.00px;letter-spacing:0.249px;height:4.00px;overflow:hidden;">Date</span>
<span style="left:317.05px;top:155.00px;color:#868686;letter-spacing:0.225px;">On Device</span>
<span style="left:337.71px;top:173.00px;color:#7e7e7e;letter-spacing:0.719px;">Title</span>
<span style="left:337.74px;top:191.00px;color:#868686;letter-spacing:0.547px;">Author(s)</span>
<span style="left:336.95px;top:209.00px;color:#7e7e7e;letter-spacing:0.208px;">Series</span>
<span style="left:337.26px;top:227.00px;color:#868686;letter-spacing:-0.106px;">Read</span>
<span style="left:337.26px;top:245.00px;color:#7e7e7e;letter-spacing:0.183px;">Percent Read</span>
<span style="left:337.28px;top:263.00px;color:#868686;letter-spacing:0.216px;">Chapters</span>
<span style="left:337.26px;top:281.00px;color:#7e7e7e;letter-spacing:-0.196px;">Last Read</span>
<span style="left:337.26px;top:299.00px;color:#868686;letter-spacing:0.062px;">Rating</span>
<span style="left:337.35px;top:317.00px;color:#7e7e7e;letter-spacing:0.218px;">On Kobo</span>
<span style="left:337.26px;top:335.00px;color:#868686;letter-spacing:0.372px;">Fandom</span>
<span style="left:337.26px;top:353.00px;color:#7e7e7e;letter-spacing:0.052px;">Fanfic Status</span>
<span style="left:337.26px;top:371.00px;color:#868686;letter-spacing:0.083px;">Page Count</span>
<span style="left:337.26px;top:389.00px;color:#7e7e7e;letter-spacing:0.212px;">Last Updated</span>
<span style="left:337.26px;top:407.00px;color:#868686;letter-spacing:0.598px;">Published</span>
<span style="left:337.26px;top:425.00px;color:#7e7e7e;letter-spacing:0.533px;">Publisher</span>
<span style="left:337.26px;top:443.00px;color:#868686;letter-spacing:0.296px;">File Formats</span>
<span style="left:336.95px;top:461.00px;color:#7e7e7e;letter-spacing:0.153px;height:4.00px;overflow:hidden;">Size (MB)</span>
<span style="left:629.35px;top:156.00px;letter-spacing:0.074px;">On Reading List</span>
<span style="left:629.26px;top:176.00px;letter-spacing:0.061px;">Reading Lists</span>
<span style="left:629.28px;top:196.00px;letter-spacing:0.533px;">Currently reading</span>
<span style="left:629.26px;top:216.00px;letter-spacing:-0.196px;">Last Read</span>
<span style="left:629.26px;top:236.00px;letter-spacing:0.183px;">Percent Read</span>
<span style="left:629.26px;top:256.00px;color:#0c0c0c;letter-spacing:0.249px;">Date</span>
<span style="left:608.35px;top:275.00px;letter-spacing:0.225px;">On Device</span>
<span style="left:608.71px;top:293.00px;letter-spacing:0.719px;">Title</span>
<span style="left:608.74px;top:311.00px;letter-spacing:0.547px;">Author(s)</span>
<span style="left:607.95px;top:329.00px;letter-spacing:0.208px;">Series</span>
<span style="left:608.26px;top:347.00px;letter-spacing:-0.106px;">Read</span>
<span style="left:608.28px;top:365.00px;letter-spacing:0.216px;">Chapters</span>
<span style="left:608.26px;top:383.00px;letter-spacing:0.062px;">Rating</span>
<span style="left:608.35px;top:401.00px;letter-spacing:0.218px;">On Kobo</span>
<span style="left:608.26px;top:419.00px;letter-spacing:0.372px;">Fandom</span>
<span style="left:608.26px;top:437.00px;letter-spacing:0.052px;">Fanfic Status</span>
<span style="left:608.26px;top:455.00px;letter-spacing:0.083px;height:10.00px;overflow:hidden;">Page Count</span>
<span style="left:30.65px;top:486.00px;letter-spacing:0.294px;">Search and Virtual Library Options</span>
<span style="left:62.84px;top:522.00px;letter-spacing:0.195px;">Apply saved <u>s</u>earch</span>
<span style="left:62.05px;top:554.00px;letter-spacing:0.513px;">Switch to <u>V</u>irtual library</span>
<span style="left:62.84px;top:586.00px;letter-spacing:0.352px;">Apply VL additional search <u>r</u>estriction</span>
<span style="left:454.21px;top:522.00px;color:#7f7f7f;letter-spacing:0.070px;">(Clear Search)</span>
<span style="left:454.06px;top:554.00px;letter-spacing:0.289px;">My Books</span>
<span style="left:454.21px;top:586.00px;letter-spacing:0.248px;">(Clear VL restriction search)</span>
<span style="left:31.18px;top:627.00px;letter-spacing:0.358px;">General Options</span>
<span style="left:62.57px;top:662.00px;letter-spacing:0.496px;">Jump to the top when applying this View</span>
<span style="left:43.76px;top:689.00px;letter-spacing:0.435px;">When restarting Calibre or switching to this library...</span>
<span style="left:62.74px;top:717.00px;letter-spacing:0.564px;"><u>A</u>utomatically apply view:</span>
<span style="left:454.62px;top:717.00px;letter-spacing:0.291px;">*Last View Used</span>
<span style="left:42.86px;top:745.00px;letter-spacing:0.391px;">Enabling this option may override any startup search restriction or title sort set in Preferences -&gt; Behaviour/Tweaks.</span>
<span style="left:34.56px;top:785.00px;letter-spacing:0.424px;">Keyboard shortcuts...</span>
<span style="left:180.34px;top:785.00px;letter-spacing:0.559px;"><u>V</u>iew library preferences...</span>
<span style="left:752.04px;top:836.00px;letter-spacing:-0.445px;">OK</span>
<span style="left:826.18px;top:836.00px;letter-spacing:0.014px;">Cancel</span>
<svg style="left:689px;top:264px" width="16" height="23" viewBox="689 264 16 23"><path d="M691.5 266.8V282L694.9 278.9L697.6 284.6L699.6 283.7L697 278.2H701.8z" fill="#fff" stroke="#000" stroke-width="1" stroke-linejoin="miter"/></svg>
</body></html>
